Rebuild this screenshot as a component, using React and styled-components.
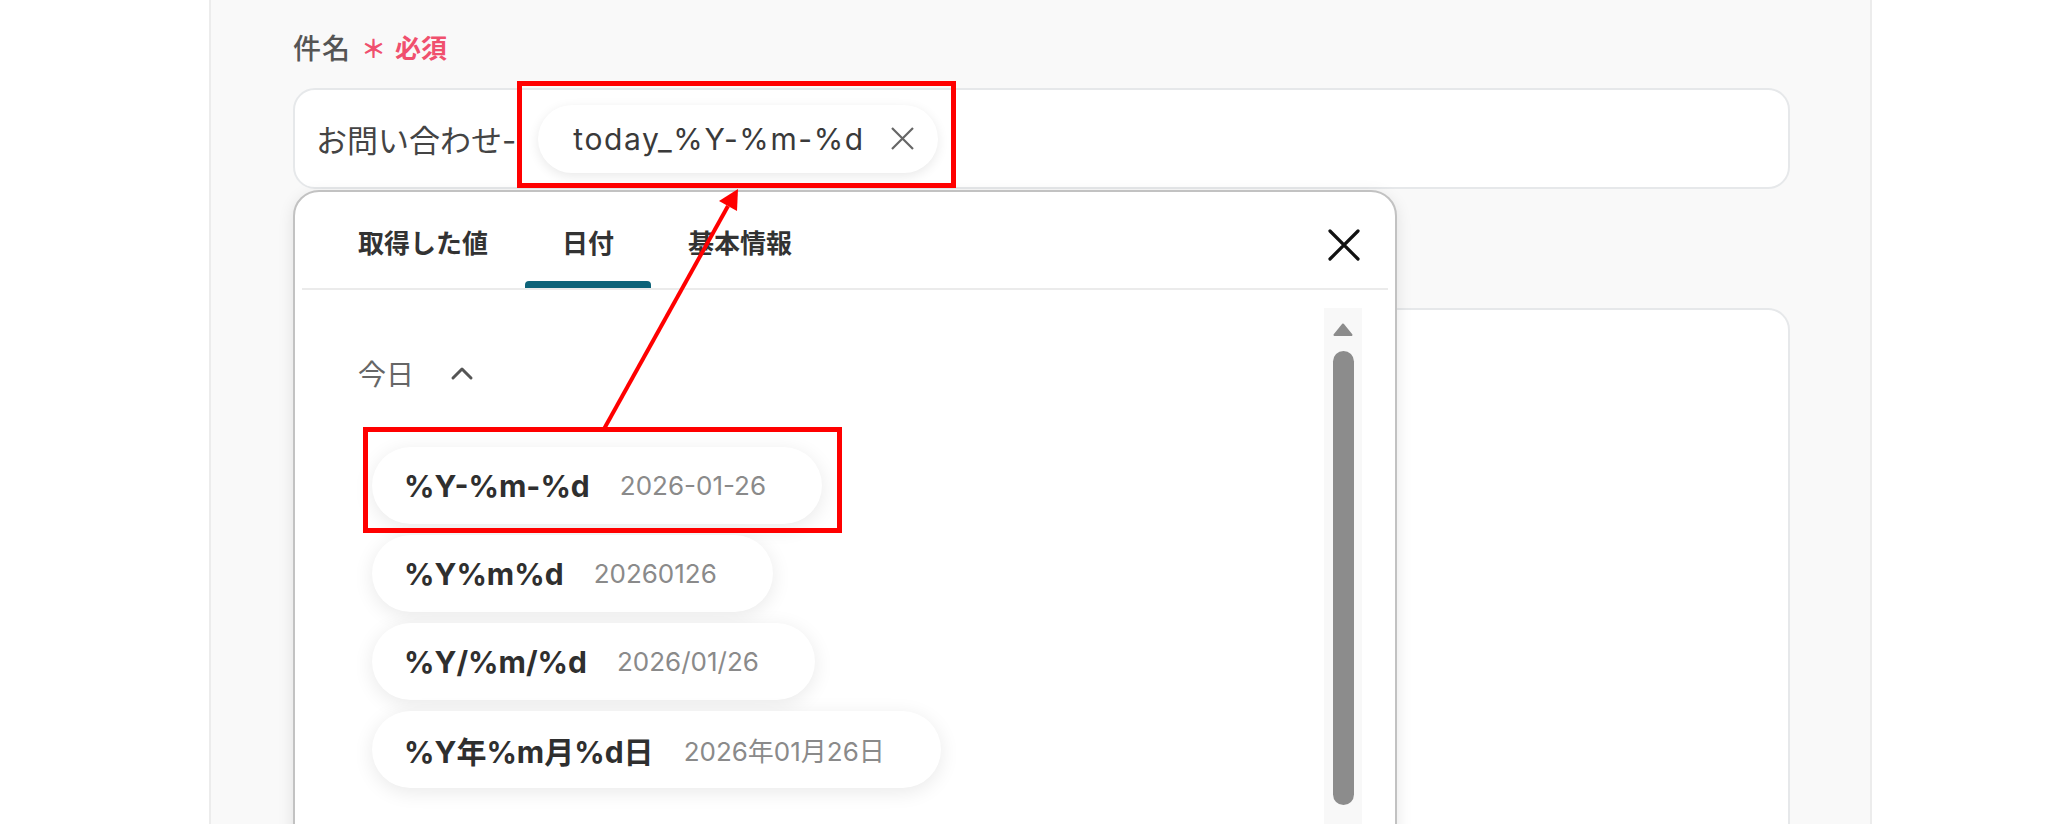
import React from "react";
import styled, { createGlobalStyle } from "styled-components";

const GlobalStyle = createGlobalStyle`
  html, body {
    margin: 0;
    padding: 0;
    background: #ffffff;
    height: 824px;
    overflow: hidden;
  }
  body {
    font-family: Inter, "Noto Sans CJK JP", "Noto Sans", sans-serif;
    color: #333;
  }
  * { box-sizing: border-box; }
`;

const Page = styled.div`
  position: relative;
  width: 2048px;
  height: 824px;
  overflow: hidden;
  background: #fff;
`;

const Panel = styled.section`
  position: relative;
  margin-left: 209px;
  width: 1663px;
  height: 824px;
  background: #f9f9f9;
  border-left: 2px solid #ececec;
  border-right: 2px solid #ececec;
  padding: 27px 80px 0 82px;
`;

const Field = styled.div`
  display: flex;
  flex-direction: column;
  gap: 22px;
`;

const Label = styled.div`
  display: flex;
  align-items: center;
  height: 39px;
`;

const LabelName = styled.span`
  font-size: 28px;
  font-weight: 500;
  color: #555;
  letter-spacing: 1px;
`;

const Star = styled.span`
  font-family: "Noto Sans CJK JP", sans-serif;
  font-size: 25px;
  font-weight: 700;
  color: #f0506e;
  margin-left: 10px;
`;

const Required = styled.span`
  font-size: 26px;
  font-weight: 700;
  color: #f0506e;
  margin-left: 9px;
`;

const InputBox = styled.div`
  display: flex;
  align-items: center;
  height: 101px;
  background: #fff;
  border: 2px solid #e6e8ea;
  border-radius: 22px;
  padding: 0 21px;
`;

const InputText = styled.span`
  font-size: 31px;
  color: #444;
  white-space: nowrap;
`;

const Chip = styled.span`
  display: inline-flex;
  align-items: center;
  gap: 25px;
  height: 68px;
  margin-left: 22px;
  padding: 0 23px 0 35px;
  border-radius: 34px;
  background: #fff;
  box-shadow: 0 3px 12px rgba(0, 0, 0, 0.09);
  font-size: 30px;
  letter-spacing: 1.6px;
  color: #3a3a3a;
  white-space: nowrap;
`;

const TextArea = styled.div`
  margin-top: 119px;
  height: 600px;
  background: #fff;
  border: 2px solid #e6e8ea;
  border-radius: 22px;
`;

const Popup = styled.div`
  position: absolute;
  left: 82px;
  top: 190px;
  width: 1104px;
  height: 700px;
  background: #fff;
  border: 2px solid #c2c2c2;
  border-radius: 26px;
  box-shadow: 0 4px 16px rgba(0, 0, 0, 0.1);
  display: flex;
  flex-direction: column;
`;

const PopupHeader = styled.div`
  display: flex;
  align-items: stretch;
  justify-content: space-between;
  height: 98px;
  margin: 0 7px;
  padding: 0 27px 0 19px;
  border-bottom: 2px solid #ebebeb;
`;

const TabList = styled.div`
  display: flex;
`;

const Tab = styled.div`
  display: flex;
  flex-direction: column;
  justify-content: space-between;
  align-items: stretch;
  padding-top: 34px;
`;

const TabLabel = styled.span`
  padding: 0 37px;
  font-size: 26px;
  line-height: 36px;
  font-weight: 600;
  color: #333;
  text-align: center;
  white-space: nowrap;
`;

const TabIndicator = styled.span`
  height: 7px;
  border-radius: 4px 4px 0 0;
  background: ${(p) => (p.$active ? "#0d6379" : "transparent")};
`;

const CloseButton = styled.button`
  align-self: center;
  margin-top: 10px;
  width: 34px;
  height: 34px;
  padding: 0;
  border: none;
  background: none;
  display: flex;
  align-items: center;
  justify-content: center;
  cursor: pointer;
`;

const PopupBody = styled.div`
  flex: 1;
  display: flex;
  min-height: 0;
`;

const List = styled.div`
  flex: 1;
  padding: 63px 0 0 63px;
`;

const SectionHead = styled.div`
  display: flex;
  align-items: center;
  gap: 36px;
  height: 40px;
  font-size: 28px;
  color: #666;
`;

const Items = styled.div`
  display: flex;
  flex-direction: column;
  align-items: flex-start;
  gap: 11px;
  margin: 54px 0 0 14px;
`;

const Item = styled.div`
  display: flex;
  align-items: center;
  gap: 30px;
  height: 77px;
  padding: 0 56px 0 32px;
  border-radius: 39px;
  background: #fff;
  box-shadow: 0 4px 20px rgba(0, 0, 0, 0.09);
  white-space: nowrap;
`;

const ItemKey = styled.span`
  font-size: 30px;
  font-weight: 700;
  color: #2f2f2f;
`;

const ItemValue = styled.span`
  font-size: 26px;
  color: #8a8a8a;
`;

const ScrollTrack = styled.div`
  width: 38px;
  margin: 18px 33px 0 0;
  background: #f8f8f8;
  display: flex;
  flex-direction: column;
  align-items: center;
  padding-top: 15px;
  gap: 15px;
`;

const ScrollThumb = styled.div`
  width: 21px;
  height: 454px;
  border-radius: 11px;
  background: #8c8c8c;
`;

const RedBox = styled.div`
  position: absolute;
  left: ${(p) => p.$x}px;
  top: ${(p) => p.$y}px;
  width: ${(p) => p.$w}px;
  height: ${(p) => p.$h}px;
  border: 5px solid #ff0000;
  pointer-events: none;
`;

const ArrowLayer = styled.svg`
  position: absolute;
  left: 0;
  top: 0;
  pointer-events: none;
`;

const items = [
  ["%Y-%m-%d", "2026-01-26"],
  ["%Y%m%d", "20260126"],
  ["%Y/%m/%d", "2026/01/26"],
  ["%Y年%m月%d日", "2026年01月26日"],
];

export default function App() {
  return (
    <Page>
      <GlobalStyle />
      <Panel>
        <Field>
          <Label>
            <LabelName>件名</LabelName>
            <Star>＊</Star>
            <Required>必須</Required>
          </Label>
          <InputBox>
            <InputText>お問い合わせ-</InputText>
            <Chip>
              today_%Y-%m-%d
              <svg width="25" height="25" viewBox="0 0 25 25">
                <path d="M2 2 L23 23 M23 2 L2 23" stroke="#666" strokeWidth="2.2" fill="none" />
              </svg>
            </Chip>
          </InputBox>
        </Field>
        <TextArea />

        <Popup>
          <PopupHeader>
            <TabList>
              <Tab>
                <TabLabel>取得した値</TabLabel>
                <TabIndicator />
              </Tab>
              <Tab>
                <TabLabel>日付</TabLabel>
                <TabIndicator $active />
              </Tab>
              <Tab>
                <TabLabel>基本情報</TabLabel>
                <TabIndicator />
              </Tab>
            </TabList>
            <CloseButton aria-label="close">
              <svg width="32" height="32" viewBox="0 0 32 32">
                <path d="M2 2 L30 30 M30 2 L2 30" stroke="#111" strokeWidth="3.2" strokeLinecap="round" fill="none" />
              </svg>
            </CloseButton>
          </PopupHeader>
          <PopupBody>
            <List>
              <SectionHead>
                今日
                <svg width="24" height="15" viewBox="0 0 24 15">
                  <path d="M3 12 L12 3 L21 12" stroke="#555" strokeWidth="3" strokeLinecap="round" strokeLinejoin="round" fill="none" />
                </svg>
              </SectionHead>
              <Items>
                {items.map(([k, v]) => (
                  <Item key={k}>
                    <ItemKey>{k}</ItemKey>
                    <ItemValue>{v}</ItemValue>
                  </Item>
                ))}
              </Items>
            </List>
            <ScrollTrack>
              <svg width="20" height="13" viewBox="0 0 20 13">
                <path d="M10 1.5 L18.5 12 L1.5 12 Z" fill="#8c8c8c" stroke="#8c8c8c" strokeWidth="2" strokeLinejoin="round" />
              </svg>
              <ScrollThumb />
            </ScrollTrack>
          </PopupBody>
        </Popup>
      </Panel>

      <RedBox $x={517} $y={81} $w={439} $h={107} />
      <RedBox $x={363} $y={427} $w={479} $h={106} />
      <ArrowLayer width="2048" height="824" viewBox="0 0 2048 824">
        <line x1="604" y1="429" x2="728" y2="206" stroke="#ff0000" strokeWidth="4" />
        <polygon points="738,189 737,211 719,201" fill="#ff0000" />
      </ArrowLayer>
    </Page>
  );
}
